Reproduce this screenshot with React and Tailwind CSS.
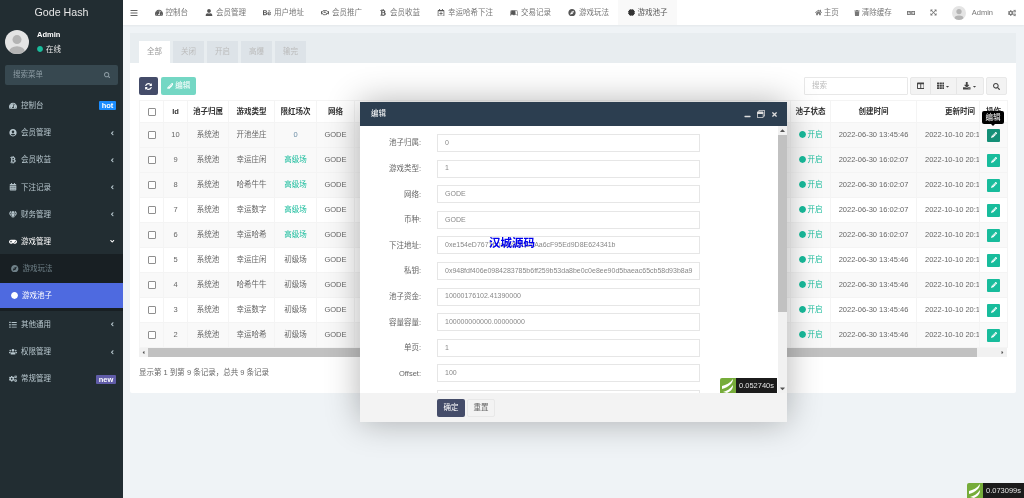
import React from "react";
import {
  FaTachometerAlt, FaUser, FaBehance, FaRegHandshake, FaBtc, FaRegCalendarPlus, FaLeanpub, FaCompass, FaCertificate,
  FaHome, FaTrash, FaLanguage, FaExpandArrowsAlt, FaCogs, FaUserCircle, FaCalendarAlt, FaGem, FaGamepad, FaList, FaUsers,
  FaSyncAlt, FaPencilAlt, FaColumns, FaTh, FaDownload, FaSearch, FaBars, FaAngleLeft, FaAngleDown, FaCircle, FaCaretDown,
  FaCaretUp, FaCaretLeft, FaCaretRight, FaTimes, FaRegWindowRestore, FaMinus,
} from "react-icons/fa";

const topNav = [
  [FaTachometerAlt, "控制台"], [FaUser, "会员管理"], [FaBehance, "用户地址"], [FaRegHandshake, "会员推广"], [FaBtc, "会员收益"],
  [FaRegCalendarPlus, "幸运哈希下注"], [FaLeanpub, "交易记录"], [FaCompass, "游戏玩法"],
];
const menuA = [
  [FaTachometerAlt, "控制台", "hot"], [FaUserCircle, "会员管理"], [FaBtc, "会员收益"], [FaCalendarAlt, "下注记录"], [FaGem, "财务管理"],
];
const menuB = [[FaList, "其他通用"], [FaUsers, "权限管理"], [FaCogs, "常规管理", "new"]];
const rows = [
  [10, "开池坐庄", "0", "2022-06-30 13:45:46"],
  [9, "幸运庄闲", "高级场", "2022-06-30 16:02:07"],
  [8, "哈希牛牛", "高级场", "2022-06-30 16:02:07"],
  [7, "幸运数字", "高级场", "2022-06-30 16:02:07"],
  [6, "幸运哈希", "高级场", "2022-06-30 16:02:07"],
  [5, "幸运庄闲", "初级场", "2022-06-30 13:45:46"],
  [4, "哈希牛牛", "初级场", "2022-06-30 13:45:46"],
  [3, "幸运数字", "初级场", "2022-06-30 13:45:46"],
  [2, "幸运哈希", "初级场", "2022-06-30 13:45:46"],
];
const fields = [
  ["池子归属:", "0"], ["游戏类型:", "1"], ["网络:", "GODE"], ["币种:", "GODE"],
  ["下注地址:", "0xe154eD7671b0a2e8f3cC5Aa6cF95Ed9D8E624341b"],
  ["私钥:", "0x948fdf406e0984283785b6ff259b53da8be0c0e8ee90d5baeac65cb58d93b8a9"],
  ["池子资金:", "10000176102.41390000"], ["容量容量:", "100000000000.00000000"], ["单页:", "1"], ["Offset:", "100"], ["", ""],
];

function Avatar({ size }) {
  return (
    <svg viewBox="0 0 40 40" width={size} height={size} className="rounded-full shrink-0">
      <rect width="40" height="40" fill="#e4e4e4" />
      <circle cx="20" cy="16" r="7.5" fill="#b4b4b4" />
      <ellipse cx="20" cy="36" rx="13" ry="9" fill="#b4b4b4" />
    </svg>
  );
}

function Trace({ value, className }) {
  return (
    <div className={"absolute flex " + className}>
      <div className="w-4 bg-[#76ac3a] rounded-tl-[2px] flex items-center justify-center">
        <svg viewBox="0 0 16 15" width="16" height="15">
          <path d="M2 8c4-1 8-3 11-7 0 4-4 8-11 10zM3 14c4-1 7-3 10-7 0 4-2 6-6 8z" fill="#fff" />
        </svg>
      </div>
      <div className="w-[41px] bg-[#1b1b1b] text-[#e4e4e4] text-[7.5px] flex items-center justify-center">{value}</div>
    </div>
  );
}

function Th({ children, className = "" }) {
  return <th className={"border border-[#f4f4f4] font-bold text-[#333333] text-[7.5px] overflow-hidden whitespace-nowrap p-0 " + className}>{children}</th>;
}
function Td({ children, className = "text-[#666666]" }) {
  return <td className={"border border-[#f4f4f4] text-[7.5px] overflow-hidden whitespace-nowrap p-0 " + className}>{children}</td>;
}

function Check() {
  return <span className="inline-block align-middle size-[8px] rounded-[1px] border border-[#8f8f8f] bg-white" />;
}

export default function App() {
  return (
    <div className="relative flex w-[1024px] h-[498px] overflow-hidden bg-[#eff3f6] text-[7.5px] text-[#666666] blur-[0.35px] font-['Liberation_Sans','Noto_Sans_CJK_SC',sans-serif]">
      {/* sidebar */}
      <aside className="w-[123px] shrink-0 bg-[#222d32] text-[#b8c7ce] flex flex-col">
        <div className="h-[25px] flex items-center justify-center text-[10.7px] text-[#e6e6e6]">Gode Hash</div>
        <div className="h-[24px] mt-[5px] pl-[5px] flex items-center gap-[8px]">
          <Avatar size={24} />
          <div className="flex flex-col gap-[3px]">
            <span className="font-bold text-white">Admin</span>
            <span className="flex items-center gap-[3px] text-[#e8e8e8]"><FaCircle className="text-[#18bc9c] text-[6px]" />在线</span>
          </div>
        </div>
        <div className="mx-[5px] mt-[11px] h-[20px] bg-[#374850] rounded-[2px] flex items-center justify-between px-[8px] text-[#8c9ba3]">
          <span>搜索菜单</span><FaSearch className="text-[6.5px]" />
        </div>
        <nav className="mt-[7px] flex flex-col">
          {menuA.map(([I, t, b]) => <MenuRow key={t} I={I} t={t} b={b} />)}
          <MenuRow I={FaGamepad} t="游戏管理" open />
          <div className="bg-[#181f23] h-[29px] flex items-center pl-[11px] gap-[3px] mt-[-1px] text-[#6f8088]">
            <FaCompass className="text-[7.5px]" /><span className="ml-[1px]">游戏玩法</span>
          </div>
          <div className="bg-[#4e6ae0] h-[25px] flex items-center pl-[11px] gap-[4px] text-white">
            <FaCircle className="text-[7px]" /><span>游戏池子</span>
          </div>
          <div className="h-[3px] bg-[#181f23]" />
          {menuB.map(([I, t, b]) => <MenuRow key={t} I={I} t={t} b={b} />)}
        </nav>
      </aside>

      {/* main */}
      <div className="flex-1 min-w-0 flex flex-col">
        <header className="h-[25px] bg-white shadow-[0_1px_2px_rgba(0,0,0,0.05)] flex items-center text-[#777777]">
          <FaBars className="ml-[7px] mr-[8px] text-[8px] text-[#666666] shrink-0" />
          {topNav.map(([I, t]) => (
            <span key={t} className="px-[8.5px] h-full flex items-center gap-[3px] shrink-0">
              <I className="w-[8px] text-[7.5px] text-[#555555]" /><span>{t}</span>
            </span>
          ))}
          <span className="pl-[10px] pr-[9px] h-full flex items-center gap-[3px] bg-[#f9f9f9] shrink-0 text-[#555555]">
            <FaCertificate className="text-[7px] text-[#333333]" /><span>游戏池子</span>
          </span>
          <div className="ml-auto flex items-center pr-[8px] h-full">
            <span className="flex items-center gap-[2px] mr-[15px]"><FaHome className="text-[7px]" />主页</span>
            <span className="flex items-center gap-[2px] mr-[15px]"><FaTrash className="text-[6px]" />清除缓存</span>
            <FaLanguage className="text-[8px] mr-[15px]" />
            <FaExpandArrowsAlt className="text-[7px] mr-[15px]" />
            <Avatar size={14} />
            <span className="ml-[6px] mr-[15px]">Admin</span>
            <FaCogs className="text-[8px]" />
          </div>
        </header>

        <section className="ml-[7px] mt-[8px] w-[886px] h-[360px] bg-white rounded-[2px] flex flex-col">
          <div className="h-[30px] bg-[#e8edf0] flex items-end pl-[9px] gap-[3px]">
            {["全部", "关闭", "开启", "高爆", "输完"].map((t, i) => (
              <span key={t} className={"w-[31px] h-[22px] flex items-center justify-center " + (i === 0 ? "bg-white text-[#999999]" : "bg-[#dde3e8] text-[#bbbbbb]")}>{t}</span>
            ))}
          </div>
          <div className="px-[9px] pt-[14px]">
            <div className="flex items-center h-[18px] mb-[5px]">
              <button className="w-[19px] h-[18px] rounded-[2px] bg-[#444c69] text-white flex items-center justify-center"><FaSyncAlt className="text-[7px]" /></button>
              <button className="ml-[3px] w-[35px] h-[18px] rounded-[2px] bg-[#74d7c4] text-white flex items-center justify-center gap-[2px]"><FaPencilAlt className="text-[6.5px]" />编辑</button>
              <div className="ml-auto flex items-center h-full">
                <div className="w-[104px] h-full border border-[#e8e8e8] rounded-[1px] flex items-center pl-[7px] text-[#bbbbbb]">搜索</div>
                <div className="ml-[2px] flex h-full bg-[#f3f3f3] border border-[#e8e8e8] rounded-[2px] text-[#444444]">
                  <span className="w-[20px] flex items-center justify-center border-r border-[#e6e6e6]"><FaColumns className="text-[7.5px]" /></span>
                  <span className="w-[26px] flex items-center justify-center gap-[1px] border-r border-[#e6e6e6]"><FaTh className="text-[7.5px]" /><FaCaretDown className="text-[5px]" /></span>
                  <span className="w-[26px] flex items-center justify-center gap-[1px]"><FaDownload className="text-[7.5px]" /><FaCaretDown className="text-[5px]" /></span>
                </div>
                <span className="ml-[2px] w-[21px] h-full bg-[#f3f3f3] border border-[#e8e8e8] rounded-[2px] flex items-center justify-center text-[#444444]"><FaSearch className="text-[7px]" /></span>
              </div>
            </div>

            <table className="table-fixed border-collapse w-[868px]">
              <colgroup>
                <col className="w-[24px]" /><col className="w-[24px]" /><col className="w-[41px]" /><col className="w-[46px]" /><col className="w-[42px]" /><col className="w-[38px]" />
                <col className="w-[436px]" /><col className="w-[40px]" /><col className="w-[86px]" /><col className="w-[63px]" /><col className="w-[28px]" />
              </colgroup>
              <thead>
                <tr className="h-[22px]">
                  <Th><Check /></Th><Th>Id</Th><Th>池子归属</Th><Th>游戏类型</Th><Th>限红场次</Th><Th>网络</Th><Th />
                  <Th>池子状态</Th><Th>创建时间</Th><Th className="text-left pl-[28px]">更新时间</Th><Th>操作</Th>
                </tr>
              </thead>
              <tbody>
                {rows.map(([id, type, level, created], i) => (
                  <tr key={id} className={"h-[25px] " + (i % 2 === 0 || i === 1 ? "bg-[#f9f9f9]" : "bg-white")}>
                    <Td className="text-center"><Check /></Td>
                    <Td className="text-center text-[#666666]">{id}</Td>
                    <Td className="text-center text-[#666666]">系统池</Td>
                    <Td className="text-center text-[#666666]">{type}</Td>
                    <Td className={level === "高级场" ? "text-center text-[#18bc9c]" : level === "0" ? "text-center text-[#6c8ea6]" : "text-center text-[#666666]"}>{level}</Td>
                    <Td className="text-center text-[#666666]">GODE</Td>
                    <Td />
                    <Td className="text-center text-[#18bc9c]"><span className="inline-flex items-center gap-[2px]"><FaCircle className="text-[7px]" />开启</span></Td>
                    <Td className="text-center text-[#666666]">{created}</Td>
                    <Td className="text-left pl-[8px] text-[#666666]">2022-10-10 20:16:31</Td>
                    <Td className="text-center">
                      <span className={"inline-flex size-[13px] rounded-[1px] items-center justify-center text-white align-middle " + (i === 0 ? "bg-[#148f77]" : "bg-[#18bc9c]")}>
                        <FaPencilAlt className="text-[6px]" />
                      </span>
                    </Td>
                  </tr>
                ))}
              </tbody>
            </table>
            <div className="w-[868px] h-[9px] bg-[#f1f1f1] flex items-center text-[#555555]">
              <FaCaretLeft className="w-[9px] text-[5px] shrink-0" />
              <div className="w-[829px] h-full bg-[#c1c1c1]" />
              <FaCaretRight className="ml-auto w-[9px] text-[5px] shrink-0" />
            </div>
            <p className="mt-[10px] text-[#666666]">显示第 1 到第 9 条记录，总共 9 条记录</p>
          </div>
        </section>
      </div>

      {/* tooltip */}
      <div className="absolute left-[982px] top-[111px] w-[22px] h-[13px] bg-black rounded-[2px] text-white flex items-center justify-center">编辑</div>
      <div className="absolute left-[991px] top-[124px] border-x-[2px] border-t-[2px] border-x-transparent border-t-black" />

      {/* modal */}
      <div className="absolute left-[360px] top-[102px] w-[427px] h-[320px] flex flex-col bg-white shadow-[0_0_32px_rgba(0,0,0,0.3)]">
        <div className="h-[24px] bg-[#2c3e50] flex items-center justify-between pl-[11px] pr-[9px] text-white shrink-0">
          <span>编辑</span>
          <span className="flex items-center gap-[6px] text-[#dddddd]"><FaMinus className="text-[7px] mt-[4px]" /><FaRegWindowRestore className="text-[8px]" /><FaTimes className="text-[7px]" /></span>
        </div>
        <div className="flex-1 min-h-0 flex relative">
          <div className="flex-1 min-w-0 overflow-hidden pt-[8px] flex flex-col gap-[7.6px]">
            {fields.map(([label, value], i) => (
              <div key={i} className="flex items-center shrink-0">
                <label className="w-[61px] text-right text-[#666666]">{label}</label>
                <div className="ml-[16px] w-[263px] h-[18px] border border-[#e6e6e6] flex items-center pl-[7px] text-[7px] text-[#888888] whitespace-nowrap overflow-hidden">{value}</div>
              </div>
            ))}
          </div>
          <div className="w-[9px] bg-[#f1f1f1] flex flex-col items-center text-[#555555] shrink-0">
            <FaCaretUp className="h-[9px] text-[5px] shrink-0" />
            <div className="w-full h-[177px] bg-[#c1c1c1]" />
            <FaCaretDown className="mt-auto h-[9px] text-[5px] shrink-0" />
          </div>
          <Trace value="0.052740s" className="left-[360px] top-[252px] h-[15px]" />
          <span className="absolute left-[129px] top-[112px] text-[11.5px] font-bold text-[#0000ee] leading-none">汉城源码</span>
        </div>
        <div className="h-[29px] bg-[#f3f3f3] flex items-center pl-[77px] gap-[2px] shrink-0">
          <button className="w-[28px] h-[18px] rounded-[2px] bg-[#444c69] text-white">确定</button>
          <button className="w-[28px] h-[18px] rounded-[2px] bg-[#f3f3f3] border border-[#e8e8e8] text-[#666666]">重置</button>
        </div>
      </div>

      <Trace value="0.073099s" className="left-[967px] top-[483px] h-[15px]" />
    </div>
  );
}

function MenuRow({ I, t, b, open }) {
  return (
    <div className={"h-[27.2px] shrink-0 flex items-center pl-[9px] pr-[7px] gap-[3px] " + (open ? "text-white" : "text-[#b8c7ce]")}>
      <I className="w-[8px] text-[7.5px] shrink-0" />
      <span className="ml-[1px]">{t}</span>
      {b === "hot" && <span className="ml-auto w-[17px] h-[9px] rounded-[1px] bg-[#1a8cff] text-white font-bold text-center leading-[9px]">hot</span>}
      {b === "new" && <span className="ml-auto w-[20px] h-[9px] rounded-[1px] bg-[#605ca8] text-white font-bold text-center leading-[9px]">new</span>}
      {!b && !open && <FaAngleLeft className="ml-auto mr-[1px] text-[6.5px]" />}
      {open && <FaAngleDown className="ml-auto mr-[1px] text-[6.5px]" />}
    </div>
  );
}
